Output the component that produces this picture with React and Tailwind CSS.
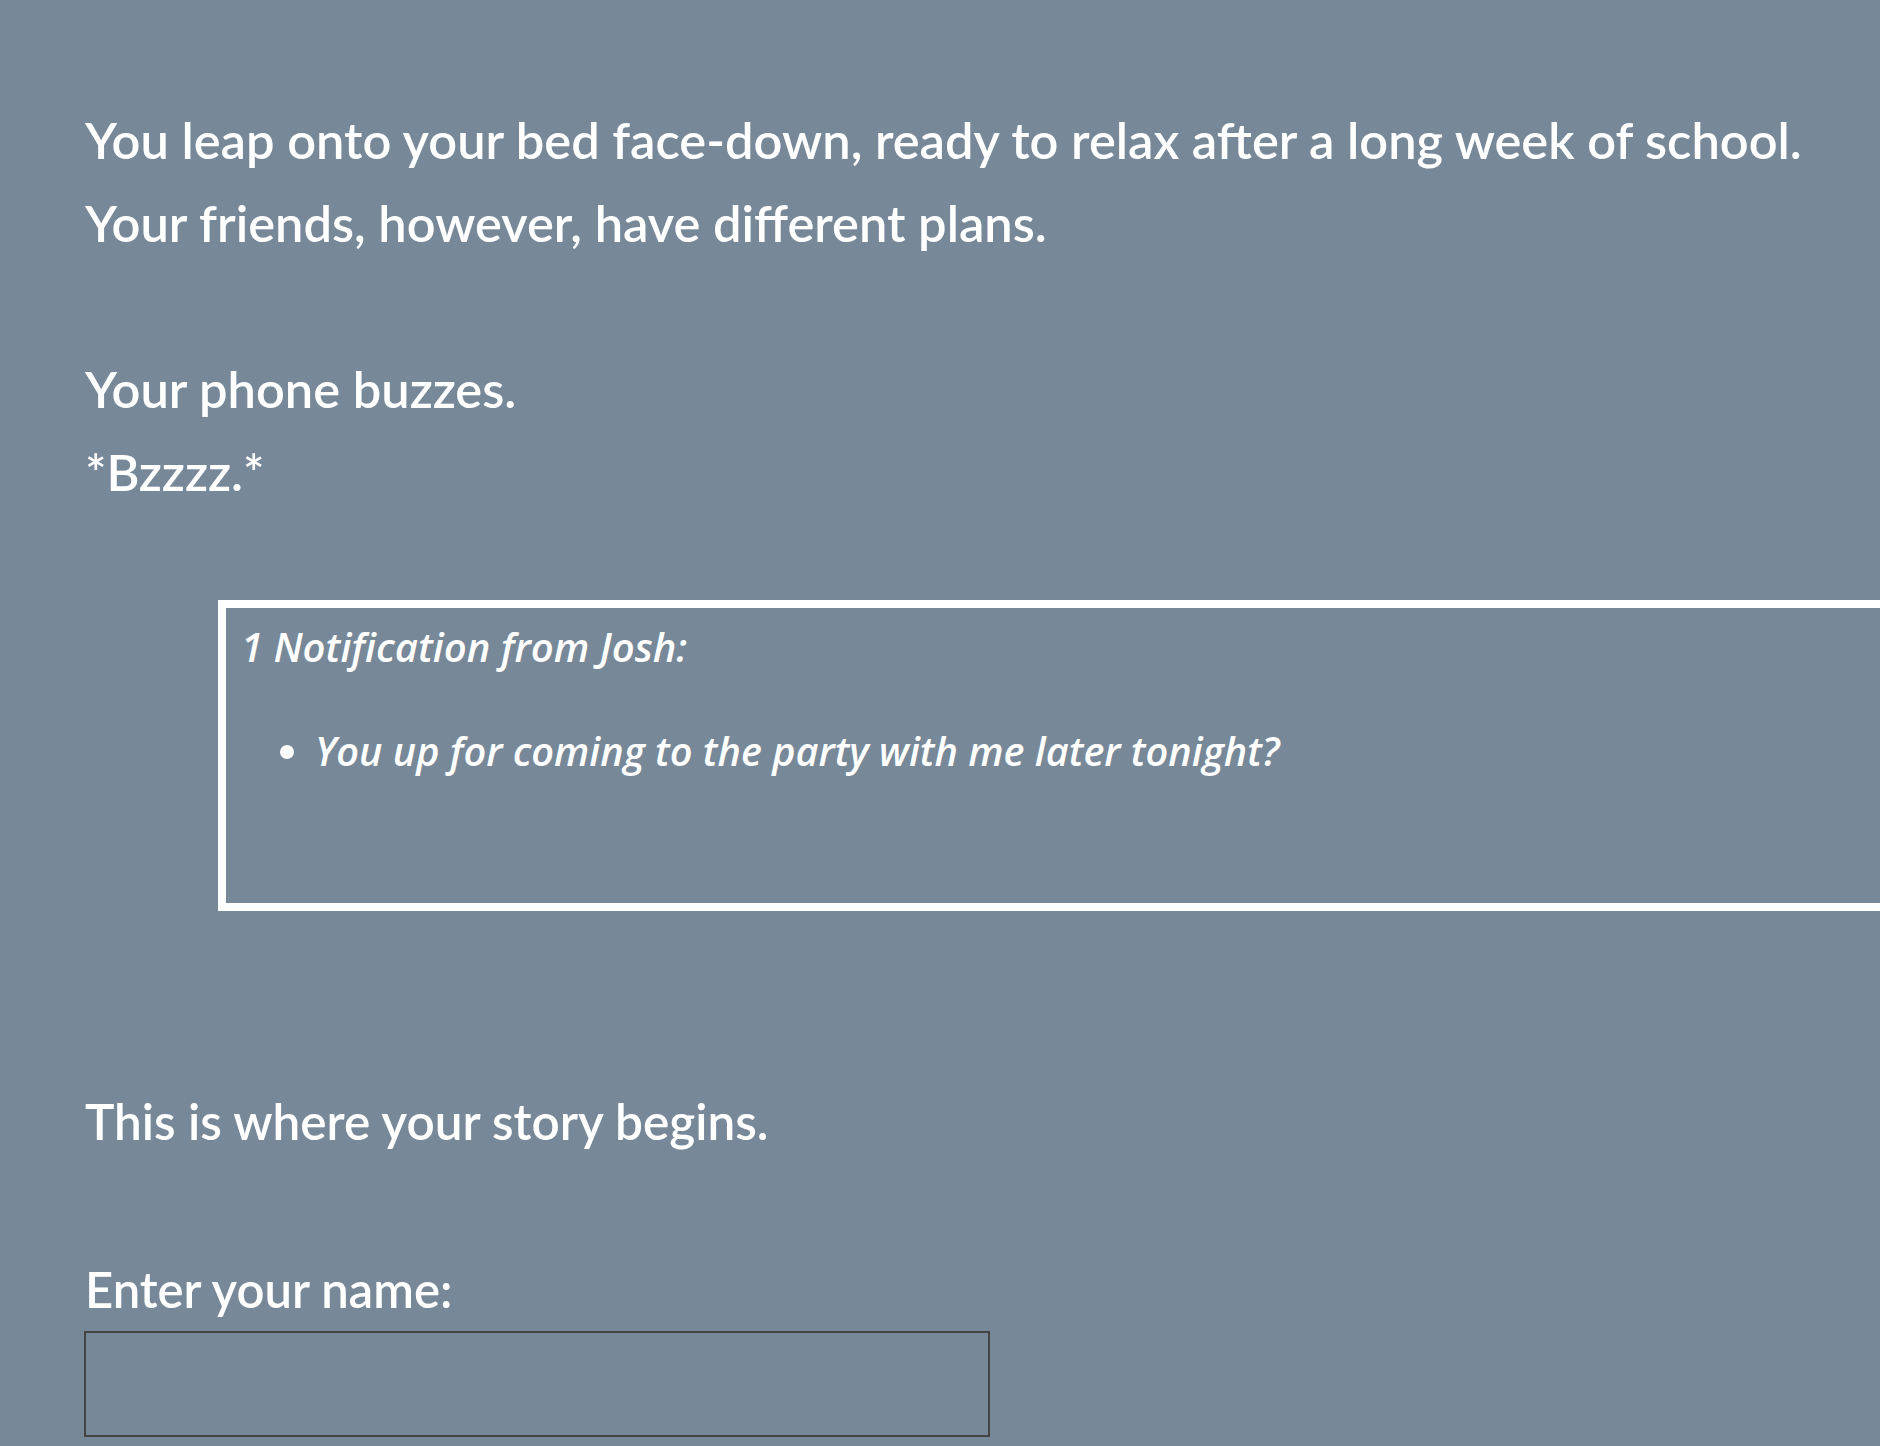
import React, { useState } from "react";

const App = () => {
  const [name, setName] = useState("");

  return (
    <div className="bg-[#778899] h-[1446px] w-full overflow-hidden text-white">
      <div className="pl-[85px] pt-[98px]">
        <p className="font-['Lato','Liberation_Sans',sans-serif] font-semibold text-[50.6px] leading-[83px] whitespace-nowrap">
          You leap onto your bed face-down, ready to relax after a long week of school.
          <br />
          Your friends, however, have different plans.
          <br />
          <br />
          Your phone buzzes.
          <br />
          *Bzzzz.*
        </p>

        <div className="mt-[87px] ml-[133px] w-[1800px] h-[311px] border-8 border-white pl-[15px] pt-[15px] font-['Open_Sans','DejaVu_Sans',sans-serif] italic font-semibold text-[40px]">
          <p className="leading-[48px]">1 Notification from Josh:</p>
          <ul className="list-disc pl-[74px] mt-[56px] leading-[48px]">
            <li className="text-[39.7px]">You up for coming to the party with me later tonight?</li>
          </ul>
        </div>

        <p className="mt-[169px] font-['Lato','Liberation_Sans',sans-serif] font-semibold text-[49.5px] leading-[83px] whitespace-nowrap">
          This is where your story begins.
        </p>

        <label className="block mt-[96px] font-['Lato','Liberation_Sans',sans-serif] font-semibold text-[49px] leading-[60px]">
          Enter your name:
        </label>
        <input
          type="text"
          value={name}
          onChange={(e) => {
            setName(e.target.value);
          }}
          className="block mt-[12px] -ml-px w-[906px] h-[106px] border-2 border-[#444] bg-transparent px-3 text-[40px] outline-none"
        />
      </div>
    </div>
  );
};

export default App;
